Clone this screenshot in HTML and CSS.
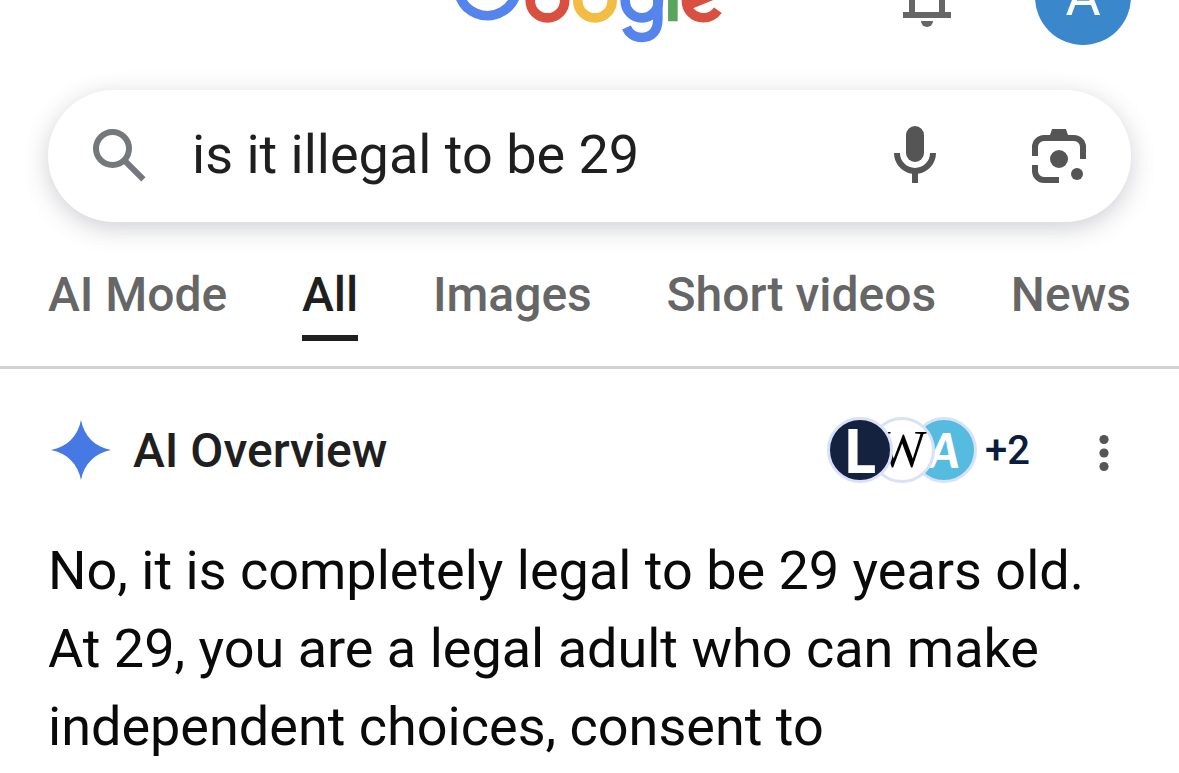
FILE: index.html
```html
<!DOCTYPE html>
<html lang="en">
<head>
  <meta charset="UTF-8">
  <meta name="viewport" content="width=device-width, initial-scale=1.0">
  <title>is it illegal to be 29 - Google Search</title>
  <link rel="stylesheet" href="styles.css">
</head>
<body>
  <header class="header">
    <a class="logo" href="#" aria-label="Google">
      <svg width="269" height="91" viewBox="0 0 272 92" fill="none" stroke-width="9.7">
        <path stroke="#5484ec" d="M55.6 13.3A29.8 29.8 0 1 0 62.3 36.7H35.3"/>
        <ellipse stroke="#d95040" cx="93.5" cy="47.2" rx="17.4" ry="17.4"/>
        <ellipse stroke="#f2bd42" cx="141.5" cy="47.2" rx="17.4" ry="17.4"/>
        <ellipse stroke="#5484ec" cx="188.9" cy="47.2" rx="16.8" ry="17.4"/>
        <path stroke="#5484ec" d="M205.1 26.3V66c0 12.500-6.500 18.400-16.400 18.400-7.500 0-13-4.600-15.400-10.100"/>
        <path stroke="#58a55c" d="M220.300 3v65"/>
        <path stroke="#d95040" d="M236.500 51.500L264 40.100C261.500 33.500 256.500 29.800 250.200 29.800C241.500 29.800 234 36.800 234 47.200C234 57.200 241.500 64.500 251 64.500C257.500 64.500 262.500 61.500 265.800 56.900"/>
      </svg>
    </a>
    <div class="account">
      <button class="icon-btn bell" aria-label="Notifications">
        <svg class="icon" viewBox="0 0 24 24" fill="#666">
          <path d="M4 19v-2h2v-7c0-2.800 1.700-5.100 4.500-5.800v-.7a1.500 1.500 0 0 1 3 0v.7C16.300 4.900 18 7.200 18 10v7h2v2H4zM8 17h8v-7a4 4 0 0 0-8 0v7z"/>
          <path d="M10 20h4a2 2 0 0 1-4 0z"/>
        </svg>
      </button>
      <a class="avatar" href="#" aria-label="Account">A</a>
    </div>
  </header>

  <form class="search" role="search">
    <svg class="icon" viewBox="0 0 24 24" fill="none" stroke="#74777c" stroke-width="2">
      <circle cx="9.500" cy="9.500" r="5.500"/>
      <path d="M13.700 13.700L19.800 19.800"/>
    </svg>
    <input class="search-input" type="text" value="is it illegal to be 29" aria-label="Search">
    <button class="icon-btn" type="button" aria-label="Search by voice">
      <svg class="icon" viewBox="0 0 24 24" fill="#555">
        <rect x="9" y="2" width="6" height="12" rx="3"/>
        <path d="M17 11a5 5 0 0 1-10 0H5a7 7 0 0 0 6 6.900V21h2v-3.100A7 7 0 0 0 19 11z"/>
      </svg>
    </button>
    <button class="icon-btn" type="button" aria-label="Search by image">
      <svg class="icon" viewBox="0 0 24 24" fill="#555">
        <path d="M3 12V9a4 4 0 0 1 4-4h2l.7-2h4.600l.7 2h2a4 4 0 0 1 4 4v4h-2V9a2 2 0 0 0-2-2H7a2 2 0 0 0-2 2v3z"/>
        <path d="M3 15h2v2a2 2 0 0 0 2 2h5v2H7a4 4 0 0 1-4-4z"/>
        <circle cx="12" cy="13" r="3"/>
        <circle cx="18" cy="18" r="2"/>
      </svg>
    </button>
  </form>

  <nav class="tabs">
    <a class="tab" href="#">AI Mode</a>
    <a class="tab active" href="#" aria-current="page">All</a>
    <a class="tab" href="#">Images</a>
    <a class="tab" href="#">Short videos</a>
    <a class="tab" href="#">News</a>
  </nav>

  <main class="overview">
    <div class="overview-head">
      <svg class="spark" viewBox="0 0 60 60" fill="#4679e3">
        <path d="M30 0C33 16 44 27 60 30C44 33 33 44 30 60C27 44 16 33 0 30C16 27 27 16 30 0z"/>
      </svg>
      <h1 class="overview-title">AI Overview</h1>
      <button class="sources" aria-label="Sources">
        <span class="source source-l">L</span>
        <span class="source source-w">W</span>
        <span class="source source-a">A</span>
        <span class="more">+2</span>
      </button>
      <button class="icon-btn menu" aria-label="More options">
        <svg class="icon" viewBox="0 0 72 72" fill="#555">
          <circle cx="36" cy="25.500" r="4.600"/>
          <circle cx="36" cy="39" r="4.600"/>
          <circle cx="36" cy="52.500" r="4.600"/>
        </svg>
      </button>
    </div>
    <p class="answer">No, it is completely legal to be 29 years old.<br>
      At 29, you are a legal adult who can make<br>
      independent choices, consent to</p>
  </main>
</body>
</html>
```
FILE: styles.css
```css
* {
  box-sizing: border-box;
}
body {
  margin: 0;
  background: #fff;
  color: #1f1f1f;
  font-family: Roboto, "Open Sans", sans-serif;
  overflow: hidden;
}
a {
  color: inherit;
  text-decoration: none;
}
button {
  border: none;
  background: none;
  padding: 0;
  font: inherit;
  cursor: pointer;
}
.icon {
  display: block;
  width: 72px;
  height: 72px;
  flex: none;
}
.icon-btn {
  flex: none;
}

/* the page is scrolled, so only the lower edge of the header shows */
.header {
  display: grid;
  grid-template-columns: 1fr auto 1fr;
  align-items: end;
  margin-top: -51px;
  padding: 0 48px;
}
.logo {
  grid-column: 2;
}
.logo svg {
  display: block;
}
.account {
  display: flex;
  justify-content: flex-end;
  align-items: flex-end;
  gap: 72px;
}
.bell {
  margin-bottom: 12px;
}
.avatar {
  width: 96px;
  height: 96px;
  border-radius: 50%;
  background: #3b87cb;
  color: #fff;
  font-size: 54px;
  line-height: 96px;
  text-align: center;
}

.search {
  display: flex;
  align-items: center;
  height: 132px;
  margin: 45px 48px 0;
  padding: 0 36px;
  border-radius: 66px;
  background: #fff;
  box-shadow: 0 6px 24px rgba(60, 64, 80, 0.25);
}
.search-input {
  flex: 1;
  min-width: 0;
  margin: 0 36px;
  padding: 0 0 4px;
  border: none;
  outline: none;
  background: none;
  color: #1f1f1f;
  font: inherit;
  font-size: 54px;
}
.search .icon-btn + .icon-btn {
  margin-left: 72px;
}

.tabs {
  display: flex;
  justify-content: space-between;
  padding: 36px 48px 25px;
  border-bottom: 3px solid #d0d0d0;
}
.tab {
  padding: 7px 0 10px;
  border-bottom: 6px solid transparent;
  color: #666;
  font-size: 48px;
  font-weight: 500;
  line-height: 60px;
}
.tab.active {
  border-color: #1f1f1f;
  color: #1f1f1f;
}

.overview {
  padding: 45px 48px 0;
}
.overview-head {
  display: flex;
  align-items: center;
  padding-left: 3px;
}
.spark {
  width: 60px;
  height: 60px;
}
.overview-title {
  flex: 1;
  margin: 0 0 0 22px;
  font-size: 48px;
  font-weight: 500;
}
.sources {
  display: flex;
  align-items: center;
  margin-right: 38px;
}
.source {
  display: flex;
  align-items: center;
  justify-content: center;
  position: relative;
  width: 66px;
  height: 66px;
  margin-right: -24px;
  border: 3px solid #d9e1f9;
  border-radius: 50%;
  line-height: 60px;
}
.source-l {
  z-index: 2;
  background: #14213f;
  color: #fff;
  font-family: "Open Sans", sans-serif;
  font-size: 60px;
  font-weight: 700;
}
.source-w {
  z-index: 1;
  background: #fff;
  color: #000;
  font-family: "Liberation Serif", serif;
  font-size: 52px;
}
.source-a {
  margin-right: 0;
  background: #55bcdf;
  color: #fff;
  font-family: Lato, sans-serif;
  font-size: 48px;
  font-style: italic;
  font-weight: 900;
}
.more {
  margin-left: 8px;
  color: #0a1d3a;
  font-size: 40px;
  font-weight: 500;
}
.menu {
  margin-right: -9px;
}
.answer {
  margin: 46px 0 0;
  color: #0a0a0a;
  font-size: 54px;
  line-height: 78px;
}
```
